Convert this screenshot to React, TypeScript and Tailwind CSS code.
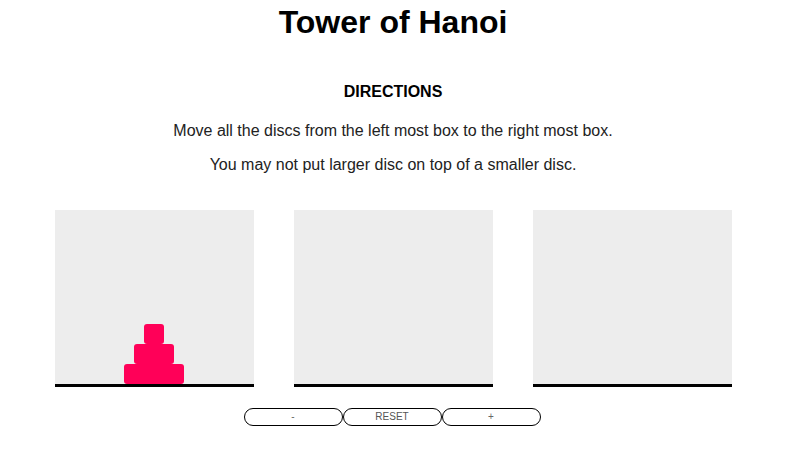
import React, { useState } from "react";

// Tower of Hanoi board: three pegs rendered as grey boxes with a floor line
const DISC_WIDTHS = [20, 40, 60];

function Peg({ discs }: { discs: number[] }) {
  return (
    <div className="flex h-[177px] w-[199px] flex-col items-center justify-end border-b-[3px] border-black bg-[#ededed]">
      {discs.map((d) => (
        <div
          key={d}
          className="h-5 rounded-[3px] bg-[#ff0058]"
          style={{ width: DISC_WIDTHS[d] }}
        />
      ))}
    </div>
  );
}

export default function App() {
  const [count, setCount] = useState(3);
  const discs = Array.from({ length: count }, (_, i) => i);

  return (
    <div className="w-[786px] bg-white text-center font-['Liberation_Sans',Arial,sans-serif] text-black">
      <h1 className="pt-1 text-[32px] font-bold leading-[37px]">Tower of Hanoi</h1>

      <h4 className="mt-[42px] text-base font-bold leading-[18px]">DIRECTIONS</h4>
      <p className="mt-[21px] text-base leading-[18px] text-[#222]">
        Move all the discs from the left most box to the right most box.
      </p>
      <p className="mt-4 text-base leading-[18px] text-[#222]">
        You may not put larger disc on top of a smaller disc.
      </p>

      <div className="mt-[36px] flex justify-center gap-[40px]">
        <Peg discs={discs} />
        <Peg discs={[]} />
        <Peg discs={[]} />
      </div>

      <div className="mt-[21px] flex justify-center pr-[2px]">
        <button
          onClick={() => setCount((c) => Math.max(1, c - 1))}
          className="h-[18px] w-[99px] rounded-full border border-black bg-white text-[10px] leading-none text-[#666]"
        >
          -
        </button>
        <button
          onClick={() => setCount(3)}
          className="h-[18px] w-[99px] rounded-full border border-black bg-white text-[10px] leading-none text-[#555]"
        >
          RESET
        </button>
        <button
          onClick={() => setCount((c) => Math.min(3, c + 1))}
          className="h-[18px] w-[99px] rounded-full border border-black bg-white text-[10px] leading-none text-[#666]"
        >
          +
        </button>
      </div>
    </div>
  );
}
